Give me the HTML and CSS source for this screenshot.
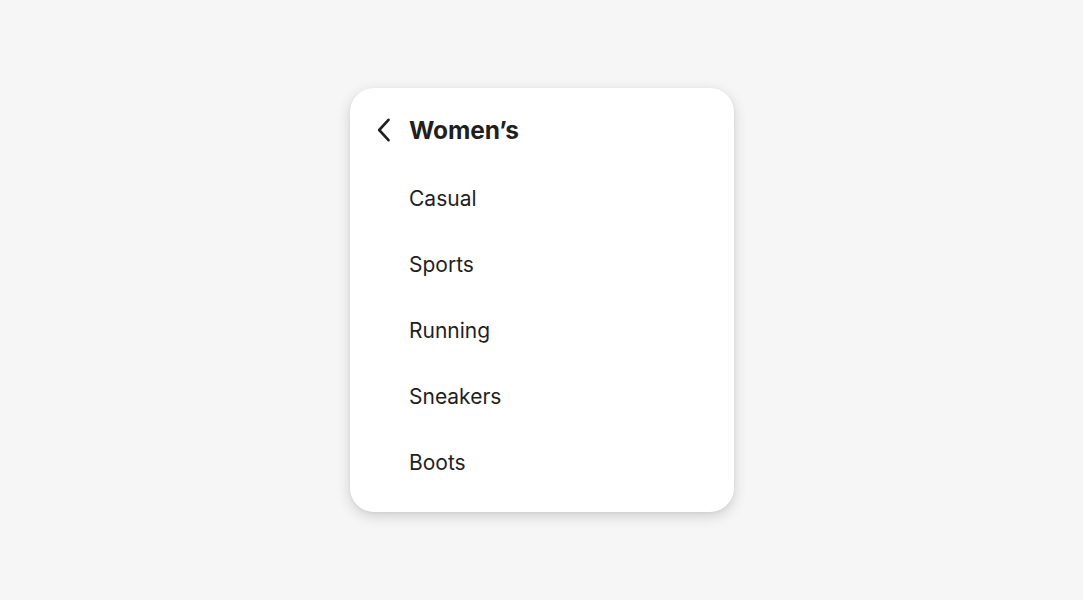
FILE: index.html
```html
<!DOCTYPE html>
<html lang="en">
<head>
<meta charset="utf-8">
<title>Women's</title>
<link rel="stylesheet" href="styles.css">
</head>
<body>
<main class="stage">
  <nav class="menu">
    <div class="menu-header">
      <button class="back" aria-label="Back">
        <svg width="24" height="24" viewBox="0 0 24 24" fill="none" stroke="#1f1f1f" stroke-width="2.6" stroke-linecap="round" stroke-linejoin="round"><path d="M14.5 1.8 L5.2 12 L14.5 22.2"/></svg>
      </button>
      <h1 class="menu-title">Women’s</h1>
    </div>
    <ul class="menu-list">
      <li class="menu-item">Casual</li>
      <li class="menu-item">Sports</li>
      <li class="menu-item">Running</li>
      <li class="menu-item">Sneakers</li>
      <li class="menu-item">Boots</li>
    </ul>
  </nav>
</main>
</body>
</html>
```

FILE: styles.css
```css
html, body {
  margin: 0;
  padding: 0;
  background: #f6f6f6;
  font-family: Inter, "Liberation Sans", sans-serif;
  color: #1f1f1f;
}
.stage {
  width: 1083px;
  height: 600px;
  display: flex;
  align-items: flex-start;
  justify-content: flex-start;
  padding: 88px 0 0 350px;
  box-sizing: border-box;
}
.menu {
  width: 384px;
  height: 424px;
  box-sizing: border-box;
  background: #fff;
  border-radius: 24px;
  box-shadow: 0 4px 14px rgba(0,0,0,0.16), 0 1px 3px rgba(0,0,0,0.06);
  padding: 9px 24px 17px 24px;
  display: flex;
  flex-direction: column;
  gap: 2px;
}
.menu-header {
  height: 66px;
  display: flex;
  align-items: center;
  gap: 11px;
}
.back {
  width: 24px;
  height: 24px;
  padding: 0;
  border: 0;
  background: none;
  display: flex;
  align-items: center;
  justify-content: center;
}
.menu-title {
  margin: 0;
  font-size: 24.5px;
  font-weight: 700;
  letter-spacing: -0.1px;
}
.menu-list {
  list-style: none;
  margin: 0;
  padding: 0 0 0 35px;
  display: flex;
  flex-direction: column;
}
.menu-item {
  height: 66px;
  display: flex;
  align-items: center;
  font-size: 21px;
  font-weight: 400;
}
```
